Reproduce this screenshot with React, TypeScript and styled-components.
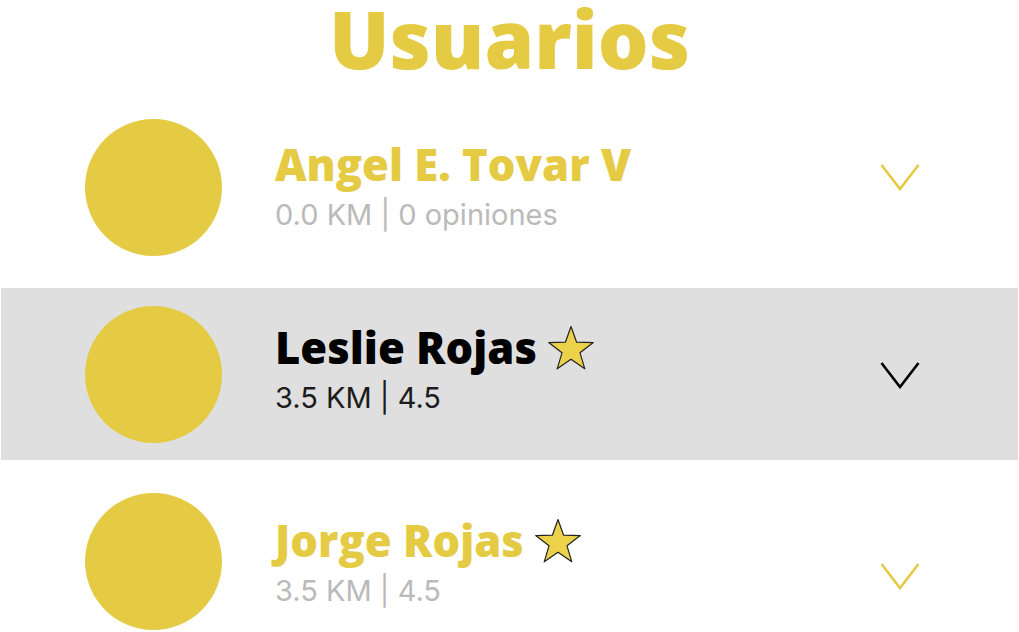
import React from "react";
import styled, { createGlobalStyle } from "styled-components";

const GlobalStyle = createGlobalStyle`
  html, body { margin: 0; padding: 0; background: #ffffff; }
  body { font-family: "Inter", "Liberation Sans", sans-serif; }
`;

const YELLOW = "#e5ca43";

const Page = styled.div`
  width: 1019px;
  height: 632px;
  overflow: hidden;
  display: flex;
  flex-direction: column;
`;

const Title = styled.h1`
  margin: 0;
  height: 101px;
  flex-shrink: 0;
  display: flex;
  justify-content: center;
  align-items: flex-start;
  font-family: "Open Sans", sans-serif;
  font-weight: 800;
  font-size: 80px;
  line-height: 76px;
  color: ${YELLOW};
`;

const List = styled.div`
  display: flex;
  flex-direction: column;
  gap: 15px;
  flex-shrink: 0;
`;

const Row = styled.div<{ $active?: boolean }>`
  height: 172px;
  flex-shrink: 0;
  margin: 0 1px;
  display: flex;
  align-items: center;
  padding: 0 98px 0 84px;
  background: ${(p) => (p.$active ? "#dfdfdf" : "transparent")};
`;

const Avatar = styled.div`
  width: 137px;
  height: 137px;
  border-radius: 50%;
  background: ${YELLOW};
  flex-shrink: 0;
`;

const Info = styled.div<{ $dy: number }>`
  flex: 1;
  margin-left: 53px;
  margin-top: ${(p) => p.$dy * 2}px;
  display: flex;
  flex-direction: column;
`;

const NameLine = styled.div`
  display: flex;
  align-items: center;
  gap: 10px;
`;

const Name = styled.span<{ $active?: boolean }>`
  font-family: "Open Sans", sans-serif;
  font-weight: 800;
  font-size: 43.5px;
  line-height: 48px;
  color: ${(p) => (p.$active ? "#000000" : YELLOW)};
`;

const Sub = styled.span<{ $active?: boolean }>`
  margin-top: 8px;
  font-family: "Inter", sans-serif;
  font-weight: 400;
  font-size: 29px;
  line-height: 36px;
  color: ${(p) => (p.$active ? "#1c1c1c" : "#bababa")};
`;

const Chevron = styled.svg<{ $dy: number }>`
  width: 40px;
  height: 28px;
  flex-shrink: 0;
  margin-top: ${(p) => p.$dy * 2}px;
`;

const Star = () => (
  <svg width="48" height="46" viewBox="0 0 48 46">
    <path
      d="M24 1.5 L29.6 17.2 L46.3 17.6 L33 27.8 L37.8 43.8 L24 34.3 L10.2 43.8 L15 27.8 L1.7 17.6 L18.4 17.2 Z"
      fill="#ebd24a"
      stroke="#222"
      strokeWidth="1.2"
      strokeLinejoin="round"
    />
  </svg>
);

type User = {
  name: string;
  sub: string;
  star?: boolean;
  active?: boolean;
  dy: number;
  cy: number;
};

const users: User[] = [
  { name: "Angel E. Tovar V", sub: "0.0 KM | 0 opiniones", dy: 0, cy: -10 },
  { name: "Leslie Rojas", sub: "3.5 KM | 4.5", star: true, active: true, dy: -4, cy: 1 },
  { name: "Jorge Rojas", sub: "3.5 KM | 4.5", star: true, dy: 2, cy: 15 },
];

export default function App() {
  return (
    <Page>
      <GlobalStyle />
      <Title>Usuarios</Title>
      <List>
        {users.map((u) => (
          <Row key={u.name} $active={u.active}>
            <Avatar />
            <Info $dy={u.dy}>
              <NameLine>
                <Name $active={u.active}>{u.name}</Name>
                {u.star && <Star />}
              </NameLine>
              <Sub $active={u.active}>{u.sub}</Sub>
            </Info>
            <Chevron viewBox="0 0 40 28" $dy={u.cy}>
              <polyline
                points="1.5,2 20,26 38.5,2"
                fill="none"
                stroke={u.active ? "#000" : YELLOW}
                strokeWidth="2.6"
              />
            </Chevron>
          </Row>
        ))}
      </List>
    </Page>
  );
}
